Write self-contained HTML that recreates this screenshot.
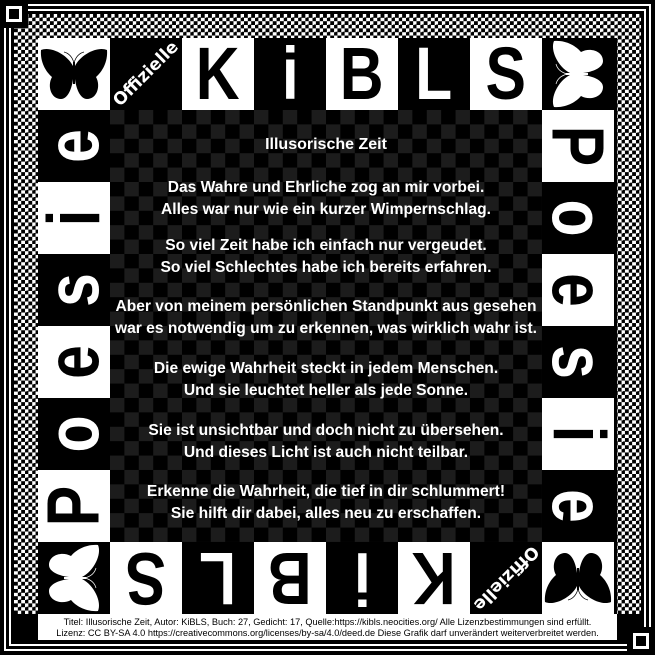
<!DOCTYPE html>
<html><head><meta charset="utf-8"><style>
*{margin:0;padding:0;box-sizing:border-box}
body{width:655px;height:655px;background:#000;position:relative;overflow:hidden;font-family:"Liberation Sans",sans-serif}
.a{position:absolute}
.chk{background:conic-gradient(#fff 0 25%,#000 0 50%,#fff 0 75%,#000 0);background-size:7.2px 7.2px}
.t{position:absolute;width:72px;height:72px;display:flex;align-items:center;justify-content:center;overflow:hidden}
.w{background:#fff;color:#000}
.b{background:#000;color:#fff}
.L{font-family:"Liberation Sans",sans-serif;font-weight:bold;font-size:74px;line-height:1}
.L span{display:inline-block}
.s{display:inline-block;transform:scaleX(0.82)}
.off{font-family:"DejaVu Sans",sans-serif;font-weight:bold;font-size:17px;color:#fff;white-space:nowrap}
#poem{position:absolute;left:110px;top:110px;width:432px;height:432px;background:conic-gradient(#000 0 25%,#1c1c1c 0 50%,#000 0 75%,#1c1c1c 0);background-size:28.8px 28.8px;color:#fff;font-weight:bold;font-size:15.6px;line-height:22px;text-align:center}
#poem p{position:absolute;left:-20px;right:-20px}
#foot{position:absolute;left:38px;top:614px;width:579px;height:26px;background:#fff;color:#000;font-size:9.2px;line-height:10.5px;text-align:center;padding-top:3px;white-space:nowrap}
</style></head><body>
<div class="a" style="left:4px;top:4px;width:647px;height:647px;border:2px solid #fff"></div>
<div class="a" style="left:9px;top:9px;width:637px;height:637px;border:2px solid #fff"></div>
<div class="a chk" style="left:14px;top:14px;width:627px;height:600px"></div>
<div class="a" style="left:38px;top:38px;width:579px;height:576px;background:#000"></div>
<div class="a" style="left:4px;top:4px;width:24px;height:24px;background:#000"></div>
<div class="a" style="left:6px;top:6px;width:16px;height:16px;border:3px solid #fff"></div>
<div class="a" style="left:627px;top:627px;width:24px;height:24px;background:#000"></div>
<div class="a" style="left:633px;top:633px;width:16px;height:16px;border:3px solid #fff"></div>

<div class="t w" style="left:38px;top:38px"><svg width="72" height="72" viewBox="0 0 72 72"><g fill="#000"><path d="M35,28 C29,16 12,8 3,12 C2,24 8,34 14,39 C9,48 13,61 23,61 C30,61 34,50 35,41 Z"/><path d="M37,28 C43,16 60,8 69,12 C70,24 64,34 58,39 C63,48 59,61 49,61 C42,61 38,50 37,41 Z"/><rect x="35" y="24" width="2" height="22"/></g><path d="M36,25 C34,18 30,15 26,14 M36,25 C38,18 42,15 46,14" stroke="#000" stroke-width="0.7" fill="none"/></svg></div>
<div class="t b" style="left:110px;top:38px"><div class="off" style="transform:rotate(-45deg)">Offizielle</div></div>
<div class="t w L" style="left:182px;top:38px"><span class="s">K</span></div>
<div class="t b L" style="left:254px;top:38px"><span class="s">i</span></div>
<div class="t w L" style="left:326px;top:38px"><span class="s">B</span></div>
<div class="t b L" style="left:398px;top:38px"><span class="s">L</span></div>
<div class="t w L" style="left:470px;top:38px"><span class="s">S</span></div>
<div class="t b" style="left:542px;top:38px"><svg width="72" height="72" viewBox="0 0 72 72" style="transform:rotate(-90deg)"><g fill="#fff"><path d="M35,28 C29,16 12,8 3,12 C2,24 8,34 14,39 C9,48 13,61 23,61 C30,61 34,50 35,41 Z"/><path d="M37,28 C43,16 60,8 69,12 C70,24 64,34 58,39 C63,48 59,61 49,61 C42,61 38,50 37,41 Z"/><rect x="35" y="24" width="2" height="22"/></g><path d="M36,25 C34,18 30,15 26,14 M36,25 C38,18 42,15 46,14" stroke="#fff" stroke-width="0.7" fill="none"/></svg></div>

<div class="t b L" style="left:38px;top:110px"><span style="transform:rotate(-90deg) scaleX(0.82)">e</span></div>
<div class="t w L" style="left:38px;top:182px"><span style="transform:rotate(-90deg) scaleX(0.82)">i</span></div>
<div class="t b L" style="left:38px;top:254px"><span style="transform:rotate(-90deg) scaleX(0.82)">s</span></div>
<div class="t w L" style="left:38px;top:326px"><span style="transform:rotate(-90deg) scaleX(0.82)">e</span></div>
<div class="t b L" style="left:38px;top:398px"><span style="transform:rotate(-90deg) scaleX(0.82)">o</span></div>
<div class="t w L" style="left:38px;top:470px"><span style="transform:rotate(-90deg) scaleX(0.82)">P</span></div>

<div class="t w L" style="left:542px;top:110px"><span style="transform:rotate(90deg) scaleX(0.82)">P</span></div>
<div class="t b L" style="left:542px;top:182px"><span style="transform:rotate(90deg) scaleX(0.82)">o</span></div>
<div class="t w L" style="left:542px;top:254px"><span style="transform:rotate(90deg) scaleX(0.82)">e</span></div>
<div class="t b L" style="left:542px;top:326px"><span style="transform:rotate(90deg) scaleX(0.82)">s</span></div>
<div class="t w L" style="left:542px;top:398px"><span style="transform:rotate(90deg) scaleX(0.82)">i</span></div>
<div class="t b L" style="left:542px;top:470px"><span style="transform:rotate(90deg) scaleX(0.82)">e</span></div>

<div class="t b" style="left:38px;top:542px"><svg width="72" height="72" viewBox="0 0 72 72" style="transform:rotate(90deg)"><g fill="#fff"><path d="M35,28 C29,16 12,8 3,12 C2,24 8,34 14,39 C9,48 13,61 23,61 C30,61 34,50 35,41 Z"/><path d="M37,28 C43,16 60,8 69,12 C70,24 64,34 58,39 C63,48 59,61 49,61 C42,61 38,50 37,41 Z"/><rect x="35" y="24" width="2" height="22"/></g><path d="M36,25 C34,18 30,15 26,14 M36,25 C38,18 42,15 46,14" stroke="#fff" stroke-width="0.7" fill="none"/></svg></div>
<div class="t w L" style="left:110px;top:542px"><span style="transform:rotate(180deg) scaleX(0.82)">S</span></div>
<div class="t b L" style="left:182px;top:542px"><span style="transform:rotate(180deg) scaleX(0.82)">L</span></div>
<div class="t w L" style="left:254px;top:542px"><span style="transform:rotate(180deg) scaleX(0.82)">B</span></div>
<div class="t b L" style="left:326px;top:542px"><span style="transform:rotate(180deg) scaleX(0.82)">i</span></div>
<div class="t w L" style="left:398px;top:542px"><span style="transform:rotate(180deg) scaleX(0.82)">K</span></div>
<div class="t b" style="left:470px;top:542px"><div class="off" style="transform:rotate(135deg)">Offizielle</div></div>
<div class="t w" style="left:542px;top:542px"><svg width="72" height="72" viewBox="0 0 72 72" style="transform:rotate(180deg)"><g fill="#000"><path d="M35,28 C29,16 12,8 3,12 C2,24 8,34 14,39 C9,48 13,61 23,61 C30,61 34,50 35,41 Z"/><path d="M37,28 C43,16 60,8 69,12 C70,24 64,34 58,39 C63,48 59,61 49,61 C42,61 38,50 37,41 Z"/><rect x="35" y="24" width="2" height="22"/></g><path d="M36,25 C34,18 30,15 26,14 M36,25 C38,18 42,15 46,14" stroke="#000" stroke-width="0.7" fill="none"/></svg></div>

<div id="poem">
<p style="top:24px;font-size:16px">Illusorische Zeit</p>
<p style="top:67px">Das Wahre und Ehrliche zog an mir vorbei.<br>Alles war nur wie ein kurzer Wimpernschlag.</p>
<p style="top:125px">So viel Zeit habe ich einfach nur vergeudet.<br>So viel Schlechtes habe ich bereits erfahren.</p>
<p style="top:186px">Aber von meinem persönlichen Standpunkt aus gesehen<br>war es notwendig um zu erkennen, was wirklich wahr ist.</p>
<p style="top:248px">Die ewige Wahrheit steckt in jedem Menschen.<br>Und sie leuchtet heller als jede Sonne.</p>
<p style="top:310px">Sie ist unsichtbar und doch nicht zu übersehen.<br>Und dieses Licht ist auch nicht teilbar.</p>
<p style="top:371px">Erkenne die Wahrheit, die tief in dir schlummert!<br>Sie hilft dir dabei, alles neu zu erschaffen.</p>
</div>

<div id="foot">Titel: Illusorische Zeit, Autor: KiBLS, Buch: 27, Gedicht: 17, Quelle:https://kibls.neocities.org/ Alle Lizenzbestimmungen sind erfüllt.<br>Lizenz: CC BY-SA 4.0 https://creativecommons.org/licenses/by-sa/4.0/deed.de Diese Grafik darf unverändert weiterverbreitet werden.</div>
</body></html>
